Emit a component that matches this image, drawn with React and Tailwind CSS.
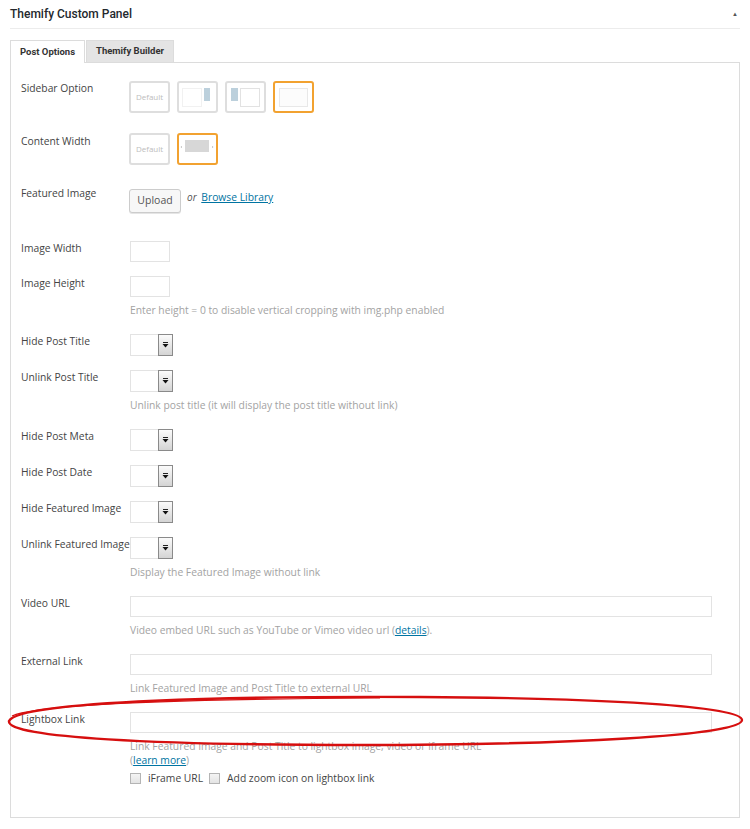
import React from 'react';

const Label = ({ children, className = '' }) => (
  <div className={`w-[109px] shrink-0 text-[10.3px] leading-[14px] text-[#444] whitespace-nowrap ${className}`}>{children}</div>
);

const Help = ({ children, className = '' }) => (
  <div className={`mt-[6px] text-[10.3px] leading-[14px] text-[#a3a3a3] whitespace-nowrap ${className}`}>{children}</div>
);

const LayoutBox = ({ selected, children }) => (
  <div
    className={`w-[41px] h-[32px] rounded-[3px] border-2 flex items-center justify-center bg-white ${
      selected ? 'border-[#f2a230]' : 'border-[#dedede]'
    }`}
  >
    {children}
  </div>
);

const DefaultIcon = () => <span className="text-[8px] text-[#bdbdbd] leading-none">Default</span>;

const SidebarRight = () => (
  <svg width="37" height="28" viewBox="0 0 37 28">
    <rect x="3.5" y="5.5" width="19" height="18" fill="#fff" stroke="#e2e2e2" strokeDasharray="1 1" />
    <rect x="25" y="5" width="6" height="13" fill="#bcd0dc" />
  </svg>
);

const SidebarLeft = () => (
  <svg width="37" height="28" viewBox="0 0 37 28">
    <rect x="4" y="5" width="7" height="13" fill="#bcd0dc" />
    <rect x="13.5" y="5.5" width="19" height="18" fill="#fff" stroke="#e2e2e2" />
  </svg>
);

const FullWidth = () => (
  <svg width="37" height="28" viewBox="0 0 37 28">
    <rect x="4.5" y="5.5" width="28" height="18" fill="#fcfcfc" stroke="#e8e8e8" />
  </svg>
);

const ContentFull = () => (
  <svg width="37" height="28" viewBox="0 0 37 28">
    <path d="M3 11 L1.5 12 L3 13 Z" fill="#b5b5b5" />
    <rect x="6" y="5" width="24" height="12" fill="#d7d7d7" />
    <path d="M33 11 L34.5 12 L33 13 Z" fill="#b5b5b5" />
  </svg>
);

const SelectBox = () => (
  <div className="flex w-[43px] h-[22px]">
    <div className="flex-1 border border-r-0 border-[#e3e3e3] bg-white" />
    <div className="w-[15px] h-full border border-[#8a8a8a] bg-gradient-to-b from-[#fbfbfb] to-[#d4d4d4] flex items-center justify-center">
      <svg width="7" height="6" viewBox="0 0 7 6">
        <rect x="1" y="0" width="5" height="1" fill="#222" />
        <path d="M0.5 2 L6.5 2 L3.5 5.5 Z" fill="#111" />
      </svg>
    </div>
  </div>
);

const SmallInput = () => <div className="w-[40px] h-[21px] border border-[#e3e3e3] bg-white" />;
const LongInput = () => <div className="w-[582px] h-[21px] border border-[#e3e3e3] bg-white" />;

const Checkbox = () => <span className="inline-block w-[11px] h-[11px] border border-[#b4b4b4] bg-gradient-to-b from-[#f4f4f4] to-[#e4e4e4]" />;

export default function App() {
  return (
    <div className="relative w-[750px] min-h-[829px] bg-white font-['Open_Sans',sans-serif]">
      <div className="mx-[10px] h-[29px] border-b border-[#ececec] flex items-center justify-between">
        <span className="font-['Roboto',sans-serif] font-medium text-[12px] text-[#23282d]">Themify Custom Panel</span>
        <span className="text-[6px] text-[#555] pr-[2px]">▲</span>
      </div>

      <div className="mx-[10px] mt-[11px] flex items-end relative z-10 font-['Roboto',sans-serif]">
        <div className="w-[75px] h-[23px] border border-b-0 border-[#dcdcdc] bg-white flex items-center justify-center text-[9.5px] font-bold text-[#333]">
          Post Options
        </div>
        <div className="ml-px w-[88px] h-[22px] border border-b-0 border-[#dcdcdc] bg-[#e4e4e4] flex items-center justify-center text-[9.5px] font-bold text-[#333] mb-px">
          Themify Builder
        </div>
      </div>

      <div className="mx-[10px] -mt-px border border-[#dcdcdc] pt-[18px] pl-[10px] pb-[32px]">
        <div className="flex items-start">
          <Label>Sidebar Option</Label>
          <div className="-ml-px flex gap-[7px]">
            <LayoutBox><DefaultIcon /></LayoutBox>
            <LayoutBox><SidebarRight /></LayoutBox>
            <LayoutBox><SidebarLeft /></LayoutBox>
            <LayoutBox selected><FullWidth /></LayoutBox>
          </div>
        </div>

        <div className="flex items-start mt-[20px]">
          <Label className="mt-px">Content Width</Label>
          <div className="-ml-px flex gap-[7px]">
            <LayoutBox><DefaultIcon /></LayoutBox>
            <LayoutBox selected><ContentFull /></LayoutBox>
          </div>
        </div>

        <div className="flex items-start mt-[21px]">
          <Label>Featured Image</Label>
          <div className="-ml-px mt-[3px] flex items-start">
            <button className="h-[24px] w-[52px] rounded-[3px] border border-[#cccccc] bg-[#f7f7f7] shadow-[0_1px_0_#e5e5e5] text-[10.5px] text-[#555]">
              Upload
            </button>
            <span className="ml-[6px] mt-px text-[10.3px] leading-[14px] whitespace-nowrap">
              <i className="text-[#555] text-[10px]">or</i>{' '}
              <a className="text-[#0074a2] underline ml-[2px]">Browse Library</a>
            </span>
          </div>
        </div>

        <div className="flex items-start mt-[28px]">
          <Label>Image Width</Label>
          <SmallInput />
        </div>

        <div className="flex items-start mt-[14px]">
          <Label>Image Height</Label>
          <div>
            <SmallInput />
            <Help>Enter height = 0 to disable vertical cropping with img.php enabled</Help>
          </div>
        </div>

        <div className="flex items-start mt-[17px]">
          <Label>Hide Post Title</Label>
          <SelectBox />
        </div>

        <div className="flex items-start mt-[14px]">
          <Label>Unlink Post Title</Label>
          <div>
            <SelectBox />
            <Help>Unlink post title (it will display the post title without link)</Help>
          </div>
        </div>

        <div className="flex items-start mt-[17px]">
          <Label>Hide Post Meta</Label>
          <SelectBox />
        </div>

        <div className="flex items-start mt-[14px]">
          <Label>Hide Post Date</Label>
          <SelectBox />
        </div>

        <div className="flex items-start mt-[14px]">
          <Label>Hide Featured Image</Label>
          <SelectBox />
        </div>

        <div className="flex items-start mt-[14px]">
          <Label>Unlink Featured Image</Label>
          <div>
            <SelectBox />
            <Help>Display the Featured Image without link</Help>
          </div>
        </div>

        <div className="flex items-start mt-[17px]">
          <Label>Video URL</Label>
          <div>
            <LongInput />
            <Help>
              Video embed URL such as YouTube or Vimeo video url (<a className="text-[#0074a2] underline">details</a>).
            </Help>
          </div>
        </div>

        <div className="flex items-start mt-[17px]">
          <Label>External Link</Label>
          <div>
            <LongInput />
            <Help>Link Featured Image and Post Title to external URL</Help>
          </div>
        </div>

        <div className="flex items-start mt-[17px]">
          <Label>Lightbox Link</Label>
          <div>
            <LongInput />
            <Help>Link Featured Image and Post Title to lightbox image, video or iframe URL</Help>
            <div className="text-[10.3px] leading-[14px] text-[#a3a3a3]">
              (<a className="text-[#0074a2] underline">learn more</a>)
            </div>
            <div className="mt-[4px] flex items-center text-[10.3px] leading-[14px] text-[#444] whitespace-nowrap">
              <Checkbox />
              <span className="ml-[7px]">iFrame URL</span>
              <span className="ml-[6px] flex"><Checkbox /></span>
              <span className="ml-[7px]">Add zoom icon on lightbox link</span>
            </div>
          </div>
        </div>
      </div>

      <svg className="absolute left-0 top-0 pointer-events-none" width="750" height="829" viewBox="0 0 750 829">
        <path
          d="M9 721 C 20 700, 250 696, 420 697 C 600 698, 742 706, 742 720 C 742 736, 560 745, 360 745 C 160 745, 6 738, 9 721 Z"
          fill="none"
          stroke="#d60f0f"
          strokeWidth="2.4"
        />
        <path
          d="M12 716 C 40 703, 200 699, 380 698"
          fill="none"
          stroke="#d60f0f"
          strokeWidth="1.2"
        />
      </svg>
    </div>
  );
}
